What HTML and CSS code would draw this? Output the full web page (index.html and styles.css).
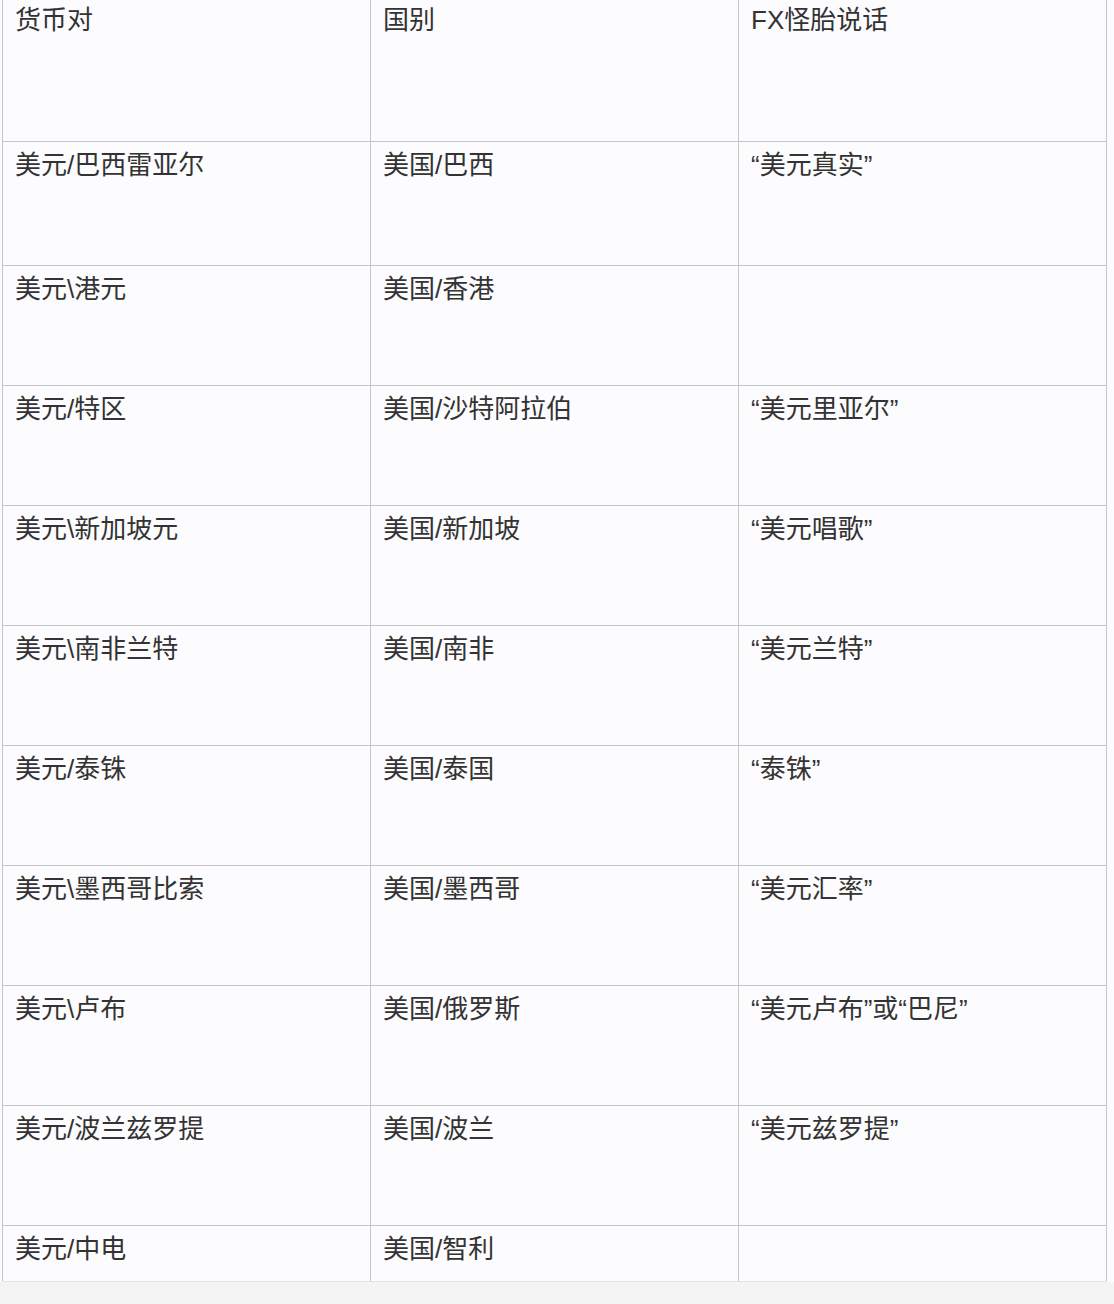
FILE: index.html
```html
<!DOCTYPE html>
<html lang="zh-CN">
<head>
<meta charset="utf-8">
<link rel="stylesheet" href="styles.css">
</head>
<body>
<div class="sheet">
<table class="fx">
<colgroup><col class="c"><col class="c"><col class="c"></colgroup>
<tr class="head"><td>货币对</td><td>国别</td><td>FX怪胎说话</td></tr>
<tr class="first"><td>美元/巴西雷亚尔</td><td>美国/巴西</td><td>“美元真实”</td></tr>
<tr class="row"><td>美元\港元</td><td>美国/香港</td><td></td></tr>
<tr class="row"><td>美元/特区</td><td>美国/沙特阿拉伯</td><td>“美元里亚尔”</td></tr>
<tr class="row"><td>美元\新加坡元</td><td>美国/新加坡</td><td>“美元唱歌”</td></tr>
<tr class="row"><td>美元\南非兰特</td><td>美国/南非</td><td>“美元兰特”</td></tr>
<tr class="row"><td>美元/泰铢</td><td>美国/泰国</td><td>“泰铢”</td></tr>
<tr class="row"><td>美元\墨西哥比索</td><td>美国/墨西哥</td><td>“美元汇率”</td></tr>
<tr class="row"><td>美元\卢布</td><td>美国/俄罗斯</td><td>“美元卢布”或“巴尼”</td></tr>
<tr class="row"><td>美元/波兰兹罗提</td><td>美国/波兰</td><td>“美元兹罗提”</td></tr>
<tr class="last"><td>美元/中电</td><td>美国/智利</td><td></td></tr>
</table>
</div>
</body>
</html>
```
FILE: styles.css
```css
html, body {
  margin: 0;
  padding: 0;
  background: #f4f4f5;
}
.sheet {
  background: #fcfbfd;
  padding-left: 2px;
  width: 1112px;
  height: 1282px;
  overflow: hidden;
}
.fx {
  margin-top: -4px;
  border-collapse: collapse;
  table-layout: fixed;
  width: 1105px;
  font-family: "Liberation Sans", "Noto Sans CJK SC", sans-serif;
  font-size: 26px;
  color: #333;
}
.fx .c { width: 368px; }
.fx td {
  border: 1px solid #c6c6c8;
  vertical-align: top;
  padding: 5px 12px 0 12px;
  line-height: 36px;
  box-sizing: border-box;
}
.fx .head td { height: 145px; }
.fx .first td { height: 124px; }
.fx .row td { height: 120px; }
.fx .last td { height: 56px; border-bottom-color: #e2e2e4; }
```
